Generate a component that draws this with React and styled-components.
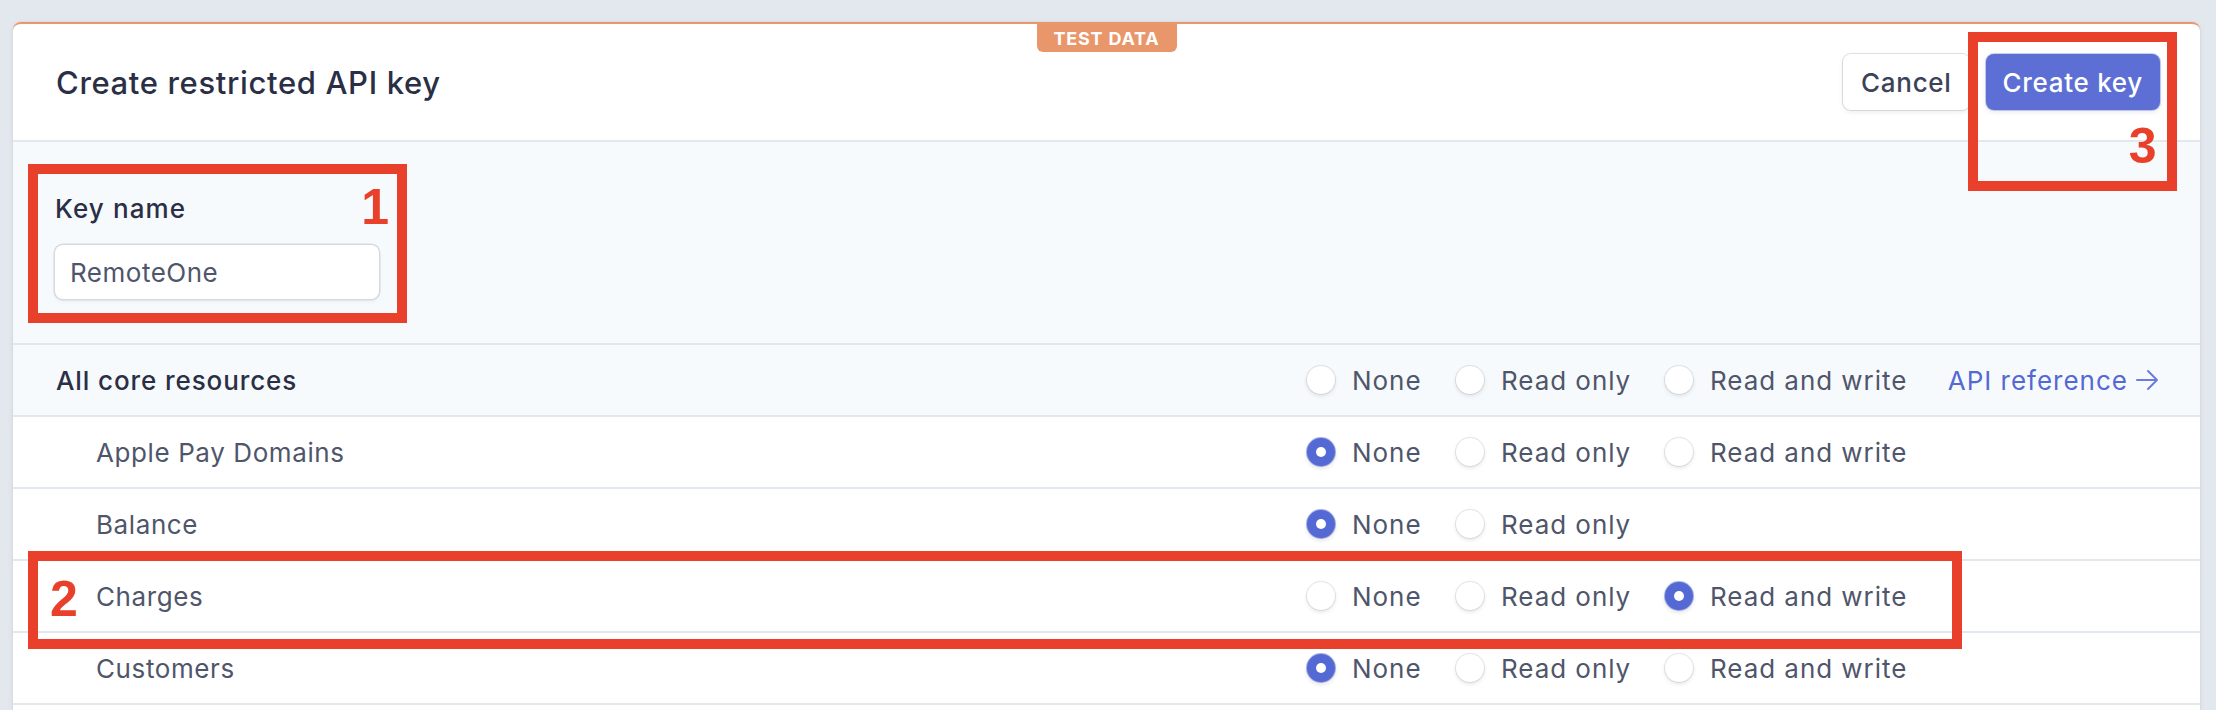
import React from 'react'
import styled, { createGlobalStyle } from 'styled-components'

const GlobalStyle = createGlobalStyle`
  html, body {
    margin: 0;
    padding: 0;
    background: #e3e8ee;
    font-family: Inter, "Noto Sans", sans-serif;
    -webkit-font-smoothing: antialiased;
  }
`

const resources = [
  { name: 'Apple Pay Domains', options: ['None', 'Read only', 'Read and write'], checked: 0 },
  { name: 'Balance', options: ['None', 'Read only'], checked: 0 },
  { name: 'Charges', options: ['None', 'Read only', 'Read and write'], checked: 2, mark: '2' },
  { name: 'Customers', options: ['None', 'Read only', 'Read and write'], checked: 0 },
]

function App() {
  return (
    <>
      <GlobalStyle />
      <Page>
        <Card>
          <Badge>TEST DATA</Badge>
          <Header>
            <Title>Create restricted API key</Title>
            <Actions>
              <Button>Cancel</Button>
              <Marked>
                <Button primary>Create key</Button>
                <Callout className='three'>
                  <Digit>3</Digit>
                </Callout>
              </Marked>
            </Actions>
          </Header>

          <KeySection>
            <Label>Key name</Label>
            <Input defaultValue='RemoteOne' />
            <Callout className='one'>
              <Digit>1</Digit>
            </Callout>
          </KeySection>

          <Row head>
            <RowLabel head>All core resources</RowLabel>
            {['None', 'Read only', 'Read and write'].map(o => (
              <Option key={o}>
                <Radio />
                <span>{o}</span>
              </Option>
            ))}
            <ApiLink href='#'>
              API reference
              <svg width='24' height='22' viewBox='0 0 24 22' fill='none'>
                <path d='M1 11h20M12 2l9 9-9 9' stroke='#6b7ce0' strokeWidth='2' strokeLinecap='round' strokeLinejoin='round' />
              </svg>
            </ApiLink>
          </Row>

          {resources.map(r => (
            <Row key={r.name}>
              <RowLabel>{r.name}</RowLabel>
              {[0, 1, 2].map(i => (
                r.options[i] ? (
                  <Option key={i}>
                    <Radio checked={r.checked === i} />
                    <span>{r.options[i]}</span>
                  </Option>
                ) : <span key={i} />
              ))}
              <span />
              {r.mark && (
                <Callout className='two'>
                  <Digit>{r.mark}</Digit>
                </Callout>
              )}
            </Row>
          ))}
        </Card>
      </Page>
    </>
  )
}

export default App

const Page = styled.div`
  padding: 22px 16px 0 13px;
  height: 688px;
  overflow: hidden;
`

const Card = styled.div`
  position: relative;
  background: #fff;
  border-top: 2px solid #ea976c;
  border-radius: 8px 8px 0 0;
  box-shadow: 0 0 0 1px rgba(60, 66, 87, 0.04), 0 2px 6px rgba(60, 66, 87, 0.08);
  min-height: 700px;
`

const Badge = styled.div`
  position: absolute;
  top: 0;
  left: 50%;
  transform: translateX(-50%);
  width: 140px;
  height: 28px;
  background: #e9966a;
  border-radius: 0 0 6px 6px;
  color: #fff;
  font-size: 18px;
  font-weight: 700;
  letter-spacing: 0.8px;
  display: flex;
  align-items: center;
  justify-content: center;
`

const Header = styled.header`
  display: flex;
  align-items: center;
  justify-content: space-between;
  height: 116px;
  padding: 0 40px 0 43px;
  border-bottom: 2px solid #e3e8ee;
`

const Title = styled.h1`
  margin: 0;
  font-size: 31px;
  font-weight: 500;
  letter-spacing: 0.65px;
  color: #2a2f45;
`

const Actions = styled.div`
  display: flex;
  gap: 16px;
`

const Marked = styled.div`
  position: relative;
`

const Button = styled.button`
  height: 56px;
  padding: 0 ${p => (p.primary ? '17px' : '18px')};
  border: 0;
  border-radius: 8px;
  font-family: inherit;
  font-size: 26px;
  font-weight: 500;
  letter-spacing: 0.7px;
  cursor: pointer;
  color: ${p => (p.primary ? '#fff' : '#3c4257')};
  background: ${p => (p.primary ? '#5d6fd5' : '#fff')};
  box-shadow: ${p =>
    p.primary
      ? '0 0 0 1px rgba(84,105,212,0.3), 0 2px 5px rgba(60,66,87,0.12)'
      : '0 0 0 1px rgba(60,66,87,0.16), 0 2px 5px rgba(60,66,87,0.1)'};
`

const Callout = styled.div`
  position: absolute;
  z-index: 3;
  border: 10px solid #e8402a;
  box-sizing: border-box;
  pointer-events: none;
  &.one {
    left: 15px;
    top: 22px;
    width: 379px;
    height: 159px;
    span { right: 8px; top: 8px; }
  }
  &.two {
    left: 15px;
    top: -10px;
    width: 1934px;
    height: 98px;
    span { left: 12px; top: 13px; }
  }
  &.three {
    left: -18px;
    top: -22px;
    width: 209px;
    height: 159px;
    span { right: 10px; top: 79px; }
  }
`

const Digit = styled.span`
  position: absolute;
  font-family: "Liberation Sans", Arial, sans-serif;
  font-weight: 700;
  font-size: 50px;
  line-height: 1;
  color: #e8402a;
`

const KeySection = styled.section`
  position: relative;
  display: flex;
  flex-direction: column;
  align-items: flex-start;
  padding: 51px 0 44px 42px;
  background: #f7fafc;
  border-bottom: 2px solid #e3e8ee;
`

const Label = styled.label`
  font-size: 26px;
  line-height: 32px;
  font-weight: 500;
  letter-spacing: 1.1px;
  color: #2a2f45;
  margin-bottom: 20px;
`

const Input = styled.input`
  width: 324px;
  height: 54px;
  box-sizing: border-box;
  padding: 0 15px;
  border: 0;
  border-radius: 8px;
  background: #fff;
  box-shadow: 0 0 0 1.5px #d5d9e1, 0 2px 4px rgba(60, 66, 87, 0.08);
  font-family: inherit;
  font-size: 26px;
  letter-spacing: 0.5px;
  color: #4f566b;
  outline: none;
`

const Row = styled.div`
  position: relative;
  display: grid;
  grid-template-columns: 1fr 149px 209px 280px 215px;
  align-items: center;
  height: 70px;
  padding: 0 40px 0 ${p => (p.head ? '43px' : '83px')};
  background: ${p => (p.head ? '#f7fafc' : '#fff')};
  border-bottom: 2px solid #e3e8ee;
`

const RowLabel = styled.div`
  font-size: 26px;
  letter-spacing: ${p => (p.head ? '0.9px' : '0.6px')};
  font-weight: ${p => (p.head ? 500 : 400)};
  color: ${p => (p.head ? '#2a2f45' : '#4f566b')};
`

const Option = styled.label`
  display: flex;
  align-items: center;
  gap: 17px;
  font-size: 26px;
  letter-spacing: 0.95px;
  color: #4f566b;
  white-space: nowrap;
`

const Radio = styled.span`
  position: relative;
  width: 28px;
  height: 28px;
  border-radius: 50%;
  flex: none;
  background: ${p => (p.checked ? '#5469d4' : '#fff')};
  box-shadow: ${p =>
    p.checked
      ? '0 0 0 1px rgba(84,105,212,0.5), 0 2px 4px rgba(60,66,87,0.18)'
      : '0 0 0 1px rgba(60,66,87,0.12), 0 2px 4px rgba(60,66,87,0.14)'};
  &::after {
    content: '';
    display: ${p => (p.checked ? 'block' : 'none')};
    position: absolute;
    left: 9px;
    top: 9px;
    width: 10px;
    height: 10px;
    border-radius: 50%;
    background: #fff;
  }
`

const ApiLink = styled.a`
  display: flex;
  align-items: center;
  justify-content: flex-end;
  gap: 8px;
  font-size: 26px;
  letter-spacing: 1px;
  color: #5469d4;
  text-decoration: none;
  white-space: nowrap;
`
